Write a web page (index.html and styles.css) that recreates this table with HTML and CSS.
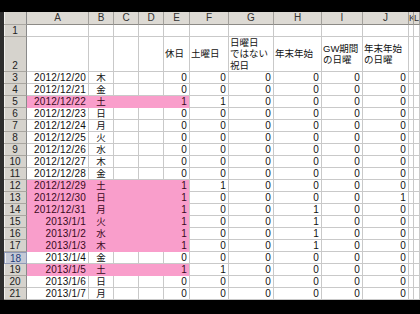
FILE: index.html
```html
<!DOCTYPE html>
<html lang="ja">
<head>
<meta charset="utf-8">
<title>Sheet</title>
<link rel="stylesheet" href="styles.css">
</head>
<body>
<div class="sheet">
  <div class="row r-col">
    <div class="c rh corner"></div>
    <div class="c ch">A</div><div class="c ch">B</div><div class="c ch">C</div><div class="c ch">D</div><div class="c ch">E</div><div class="c ch">F</div><div class="c ch">G</div><div class="c ch">H</div><div class="c ch">I</div><div class="c ch">J</div><div class="c ch ch-narrow">K</div><div class="c ch ch-narrow">L</div>
  </div>
  <div class="row">
    <div class="c rh">1</div>
    <div class="c"></div><div class="c"></div><div class="c"></div><div class="c"></div><div class="c"></div><div class="c"></div><div class="c"></div><div class="c"></div><div class="c"></div><div class="c"></div><div class="c"></div><div class="c"></div>
  </div>
  <div class="row r-tall">
    <div class="c rh rh-bottom">2</div>
    <div class="c"></div><div class="c"></div><div class="c"></div><div class="c"></div>
    <div class="c hd">休日</div>
    <div class="c hd">土曜日</div>
    <div class="c hd">日曜日<br>ではない<br>祝日</div>
    <div class="c hd">年末年始</div>
    <div class="c hd">GW期間<br>の日曜</div>
    <div class="c hd">年末年始<br>の日曜</div>
    <div class="c"></div><div class="c"></div>
  </div>

  <div class="row"><div class="c rh">3</div><div class="c num">2012/12/20</div><div class="c wd">木</div><div class="c"></div><div class="c"></div><div class="c num">0</div><div class="c num">0</div><div class="c num">0</div><div class="c num">0</div><div class="c num">0</div><div class="c num">0</div><div class="c"></div><div class="c"></div></div>
  <div class="row"><div class="c rh">4</div><div class="c num">2012/12/21</div><div class="c wd">金</div><div class="c"></div><div class="c"></div><div class="c num">0</div><div class="c num">0</div><div class="c num">0</div><div class="c num">0</div><div class="c num">0</div><div class="c num">0</div><div class="c"></div><div class="c"></div></div>
  <div class="row"><div class="c rh">5</div><div class="c num p">2012/12/22</div><div class="c wd p">土</div><div class="c p"></div><div class="c p"></div><div class="c num p pe">1</div><div class="c num">1</div><div class="c num">0</div><div class="c num">0</div><div class="c num">0</div><div class="c num">0</div><div class="c"></div><div class="c"></div></div>
  <div class="row"><div class="c rh">6</div><div class="c num">2012/12/23</div><div class="c wd">日</div><div class="c"></div><div class="c"></div><div class="c num">0</div><div class="c num">0</div><div class="c num">0</div><div class="c num">0</div><div class="c num">0</div><div class="c num">0</div><div class="c"></div><div class="c"></div></div>
  <div class="row"><div class="c rh">7</div><div class="c num">2012/12/24</div><div class="c wd">月</div><div class="c"></div><div class="c"></div><div class="c num">0</div><div class="c num">0</div><div class="c num">0</div><div class="c num">0</div><div class="c num">0</div><div class="c num">0</div><div class="c"></div><div class="c"></div></div>
  <div class="row"><div class="c rh">8</div><div class="c num">2012/12/25</div><div class="c wd">火</div><div class="c"></div><div class="c"></div><div class="c num">0</div><div class="c num">0</div><div class="c num">0</div><div class="c num">0</div><div class="c num">0</div><div class="c num">0</div><div class="c"></div><div class="c"></div></div>
  <div class="row"><div class="c rh">9</div><div class="c num">2012/12/26</div><div class="c wd">水</div><div class="c"></div><div class="c"></div><div class="c num">0</div><div class="c num">0</div><div class="c num">0</div><div class="c num">0</div><div class="c num">0</div><div class="c num">0</div><div class="c"></div><div class="c"></div></div>
  <div class="row"><div class="c rh">10</div><div class="c num">2012/12/27</div><div class="c wd">木</div><div class="c"></div><div class="c"></div><div class="c num">0</div><div class="c num">0</div><div class="c num">0</div><div class="c num">0</div><div class="c num">0</div><div class="c num">0</div><div class="c"></div><div class="c"></div></div>
  <div class="row"><div class="c rh">11</div><div class="c num">2012/12/28</div><div class="c wd">金</div><div class="c"></div><div class="c"></div><div class="c num">0</div><div class="c num">0</div><div class="c num">0</div><div class="c num">0</div><div class="c num">0</div><div class="c num">0</div><div class="c"></div><div class="c"></div></div>
  <div class="row"><div class="c rh">12</div><div class="c num p">2012/12/29</div><div class="c wd p">土</div><div class="c p"></div><div class="c p"></div><div class="c num p pe">1</div><div class="c num">1</div><div class="c num">0</div><div class="c num">0</div><div class="c num">0</div><div class="c num">0</div><div class="c"></div><div class="c"></div></div>
  <div class="row"><div class="c rh">13</div><div class="c num p">2012/12/30</div><div class="c wd p">日</div><div class="c p"></div><div class="c p"></div><div class="c num p pe">1</div><div class="c num">0</div><div class="c num">0</div><div class="c num">0</div><div class="c num">0</div><div class="c num">1</div><div class="c"></div><div class="c"></div></div>
  <div class="row"><div class="c rh">14</div><div class="c num p">2012/12/31</div><div class="c wd p">月</div><div class="c p"></div><div class="c p"></div><div class="c num p pe">1</div><div class="c num">0</div><div class="c num">0</div><div class="c num">1</div><div class="c num">0</div><div class="c num">0</div><div class="c"></div><div class="c"></div></div>
  <div class="row"><div class="c rh">15</div><div class="c num p">2013/1/1</div><div class="c wd p">火</div><div class="c p"></div><div class="c p"></div><div class="c num p pe">1</div><div class="c num">0</div><div class="c num">0</div><div class="c num">1</div><div class="c num">0</div><div class="c num">0</div><div class="c"></div><div class="c"></div></div>
  <div class="row"><div class="c rh">16</div><div class="c num p">2013/1/2</div><div class="c wd p">水</div><div class="c p"></div><div class="c p"></div><div class="c num p pe">1</div><div class="c num">0</div><div class="c num">0</div><div class="c num">1</div><div class="c num">0</div><div class="c num">0</div><div class="c"></div><div class="c"></div></div>
  <div class="row"><div class="c rh">17</div><div class="c num p">2013/1/3</div><div class="c wd p">木</div><div class="c p"></div><div class="c p"></div><div class="c num p pe">1</div><div class="c num">0</div><div class="c num">0</div><div class="c num">1</div><div class="c num">0</div><div class="c num">0</div><div class="c"></div><div class="c"></div></div>
  <div class="row"><div class="c rh sel">18</div><div class="c num">2013/1/4</div><div class="c wd">金</div><div class="c"></div><div class="c"></div><div class="c num">0</div><div class="c num">0</div><div class="c num">0</div><div class="c num">0</div><div class="c num">0</div><div class="c num">0</div><div class="c"></div><div class="c"></div></div>
  <div class="row"><div class="c rh">19</div><div class="c num p">2013/1/5</div><div class="c wd p">土</div><div class="c p"></div><div class="c p"></div><div class="c num p pe">1</div><div class="c num">1</div><div class="c num">0</div><div class="c num">0</div><div class="c num">0</div><div class="c num">0</div><div class="c"></div><div class="c"></div></div>
  <div class="row"><div class="c rh">20</div><div class="c num">2013/1/6</div><div class="c wd">日</div><div class="c"></div><div class="c"></div><div class="c num">0</div><div class="c num">0</div><div class="c num">0</div><div class="c num">0</div><div class="c num">0</div><div class="c num">0</div><div class="c"></div><div class="c"></div></div>
  <div class="row"><div class="c rh">21</div><div class="c num">2013/1/7</div><div class="c wd">月</div><div class="c"></div><div class="c"></div><div class="c num">0</div><div class="c num">0</div><div class="c num">0</div><div class="c num">0</div><div class="c num">0</div><div class="c num">0</div><div class="c"></div><div class="c"></div></div>
</div>
</body>
</html>
```
FILE: styles.css
```css
html, body {
  margin: 0;
  padding: 0;
  background: #000;
  width: 420px;
  height: 314px;
  overflow: hidden;
}
body {
  font-family: "Liberation Sans", "Noto Sans CJK JP", sans-serif;
  color: #111;
}
.sheet {
  margin-top: 12px;
  height: 288px;
  overflow: hidden;
  background: #fff;
  border-left: 4px solid #2e2e2e;
  box-sizing: border-box;
}
.row {
  display: grid;
  grid-template-columns: 23px 62px 25px 25px 25px 26px 39px 45px 48px 41px 46px 5px 1fr;
  height: 12px;
}
.row.r-col { height: 13px; }
.row.r-tall { height: 35px; }
.c {
  box-sizing: border-box;
  border-right: 1px solid #c9c9c9;
  border-bottom: 1px solid #c9c9c9;
  font-size: 10px;
  line-height: 11px;
  white-space: nowrap;
  overflow: hidden;
  background: #fff;
}
.rh {
  background: #d6d3cd;
  border-right: 1px solid #8a8a8a;
  border-bottom: 1px solid #a9a6a0;
  text-align: center;
  color: #222;
  font-size: 10px;
  box-shadow: inset 1px 0 0 #f2f1ee;
}
.rh-bottom {
  display: flex;
  align-items: flex-end;
  justify-content: center;
}
.rh.sel {
  background: #c5cad6;
  color: #1f3a7a;
  border: 1px solid #8f9ab8;
}
.corner { background: #d6d3cd; }
.ch {
  background: #dddad4;
  border-right: 1px solid #a2a09b;
  border-bottom: 1px solid #8c8a86;
  text-align: center;
  color: #333;
  font-size: 10px;
  line-height: 12px;
}
.ch.ch-narrow {
  text-align: left;
  font-size: 9px;
  padding-left: 0;
}
.hd {
  font-size: 9.5px;
  line-height: 11.3px;
  padding-left: 1px;
  display: flex;
  align-items: center;
  white-space: nowrap;
  color: #111;
}
.num {
  text-align: right;
  padding-right: 2px;
  letter-spacing: 0.2px;
}
.wd {
  text-align: center;
  font-size: 9.5px;
}
.p {
  background: #f99ecb;
  border-right-color: #f99ecb;
  border-bottom-color: #f99ecb;
  color: #3a0820;
}
.p.pe { border-right-color: #c9c9c9; }
```
